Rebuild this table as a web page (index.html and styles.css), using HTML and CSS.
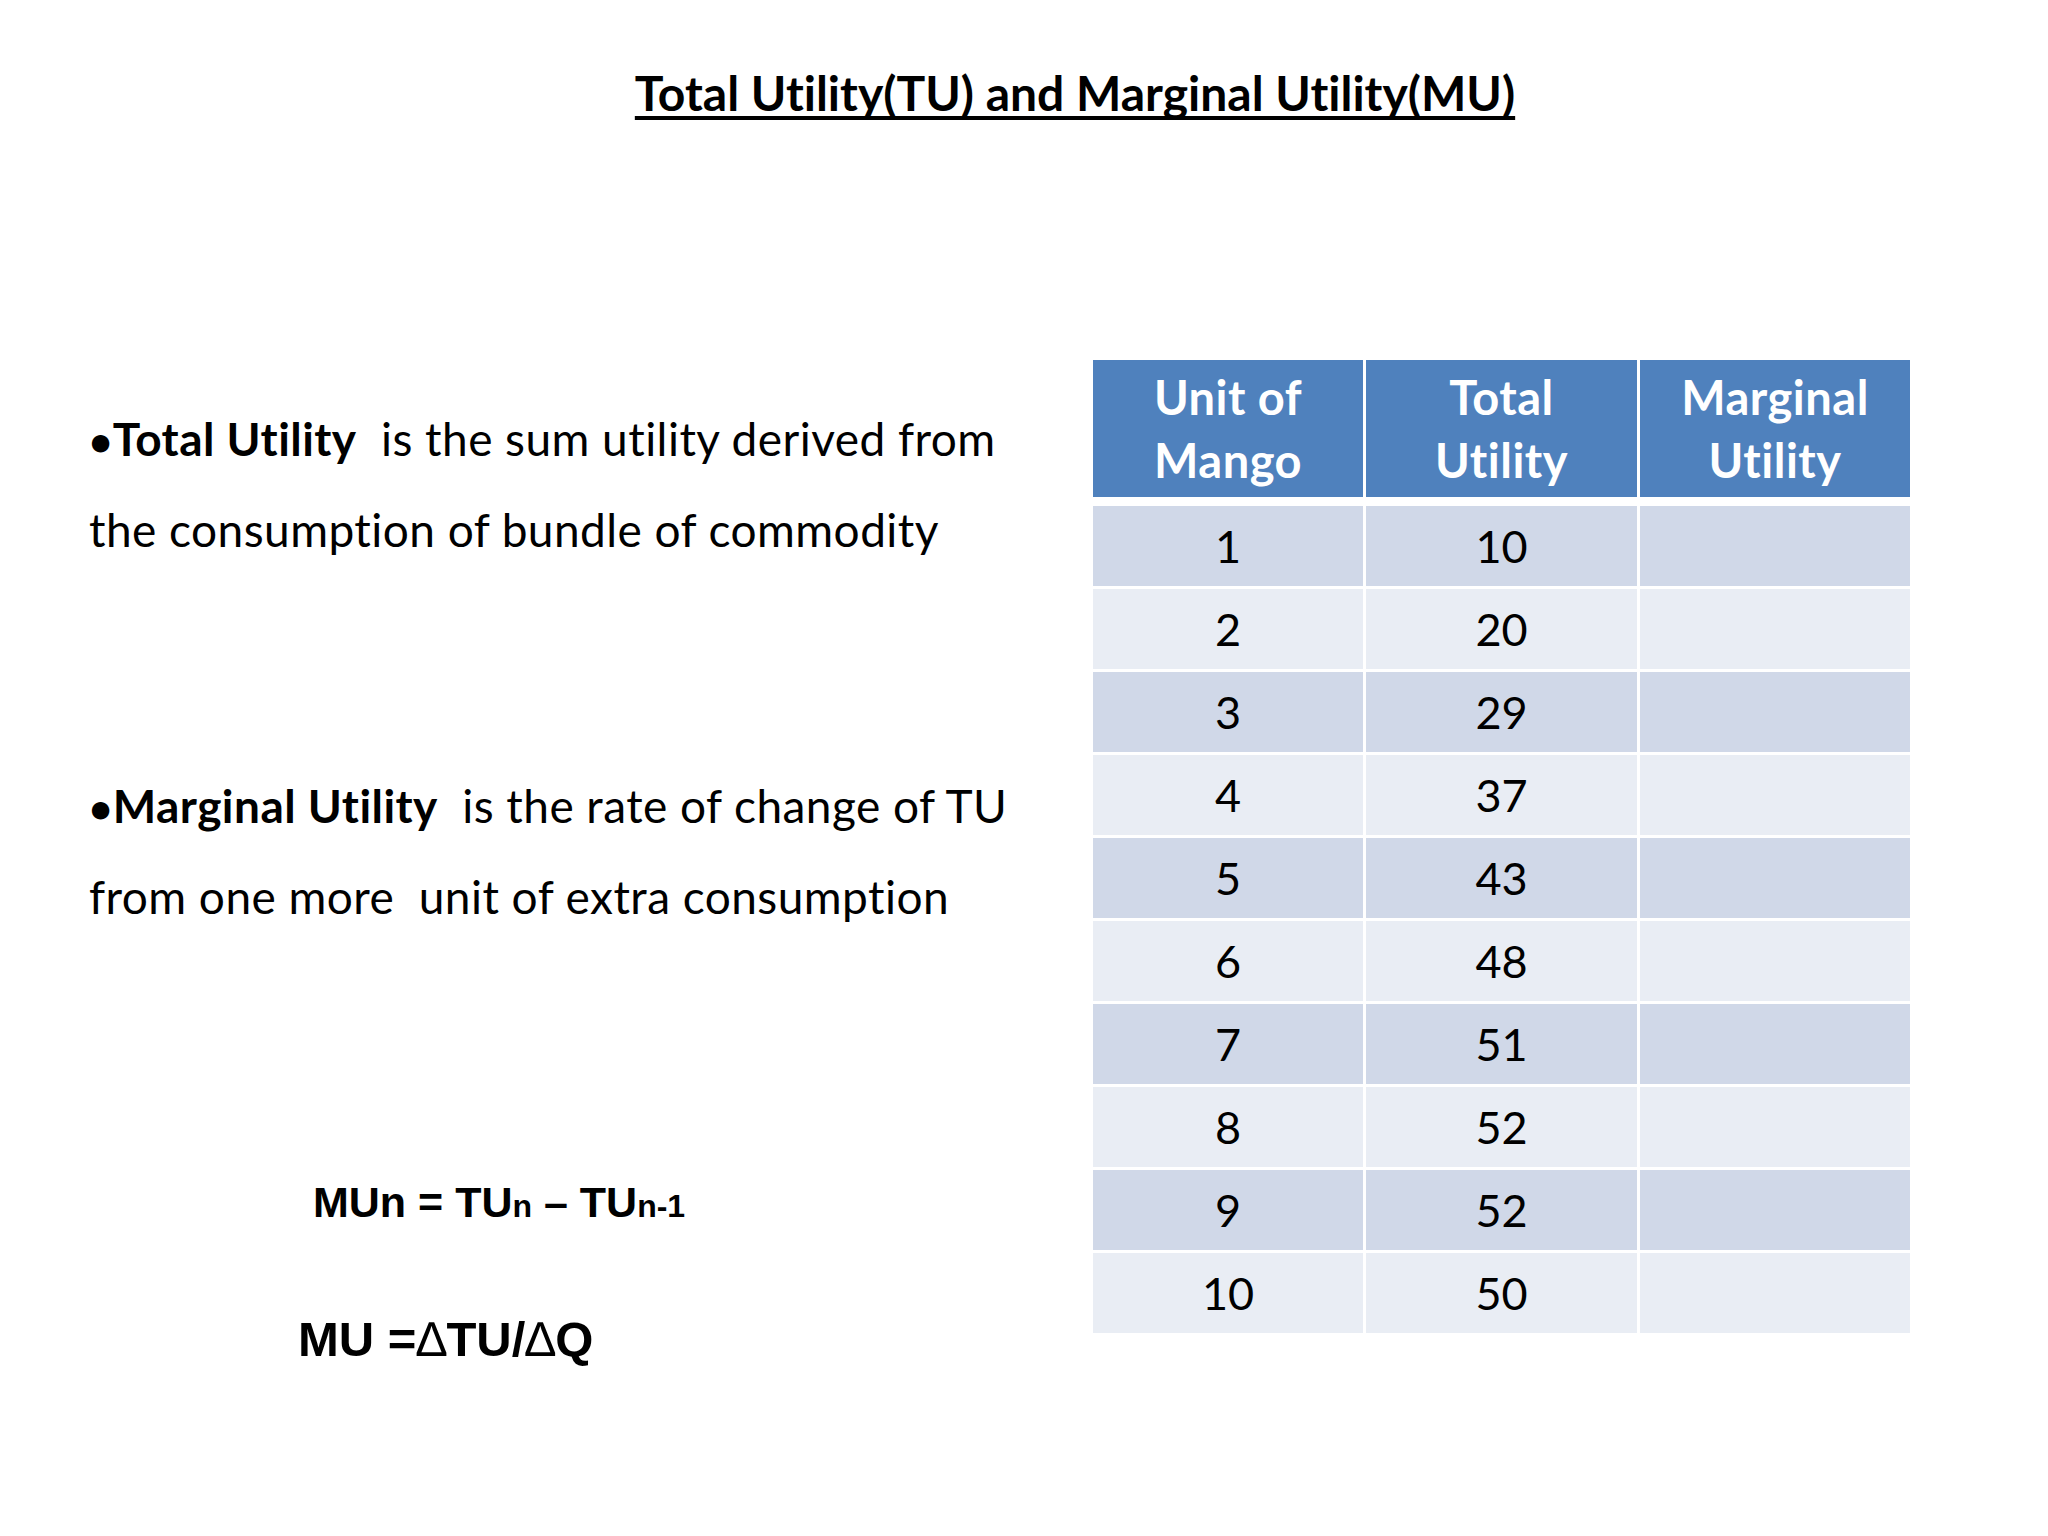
FILE: index.html
```html
<!DOCTYPE html>
<html>
<head>
<meta charset="utf-8">
<link rel="stylesheet" href="styles.css">
</head>
<body>
<div class="slide">
  <h1 class="title"><span class="title-text">Total Utility(TU) and Marginal Utility(MU)</span></h1>
  <div class="content">
    <div class="left">
      <p class="para para-first"><b><span class="bullet">•</span>Total Utility</b>&nbsp; is the sum utility derived from<br>the consumption of bundle of commodity</p>
      <p class="para para-second"><b><span class="bullet">•</span>Marginal Utility</b>&nbsp; is the rate of change of TU<br>from one more&nbsp; unit of extra consumption</p>
      <div class="formula formula-one">MUn = TU<span class="sub">n</span> – TU<span class="sub">n-1</span></div>
      <div class="formula formula-two">MU =<span class="delta">∆</span>TU/<span class="delta">∆</span>Q</div>
    </div>
    <div class="table">
      <div class="thead">
        <div class="th">Unit of<br>Mango</div>
        <div class="th">Total<br>Utility</div>
        <div class="th">Marginal<br>Utility</div>
      </div>
      <div class="tbody">
        <div class="td odd">1</div><div class="td odd">10</div><div class="td odd"></div>
        <div class="td even">2</div><div class="td even">20</div><div class="td even"></div>
        <div class="td odd">3</div><div class="td odd">29</div><div class="td odd"></div>
        <div class="td even">4</div><div class="td even">37</div><div class="td even"></div>
        <div class="td odd">5</div><div class="td odd">43</div><div class="td odd"></div>
        <div class="td even">6</div><div class="td even">48</div><div class="td even"></div>
        <div class="td odd">7</div><div class="td odd">51</div><div class="td odd"></div>
        <div class="td even">8</div><div class="td even">52</div><div class="td even"></div>
        <div class="td odd">9</div><div class="td odd">52</div><div class="td odd"></div>
        <div class="td even">10</div><div class="td even">50</div><div class="td even"></div>
      </div>
    </div>
  </div>
</div>
</body>
</html>
```

FILE: styles.css
```css
html, body {
  margin: 0;
  padding: 0;
  background: #ffffff;
}
.slide {
  width: 2048px;
  height: 1536px;
  box-sizing: border-box;
  padding-top: 70px;
  font-family: Lato, "Open Sans", sans-serif;
  font-variant-ligatures: none;
  color: #000;
  overflow: hidden;
}
.title {
  margin: 0;
  padding-left: 102px;
  text-align: center;
  font-size: 48px;
  line-height: 45px;
  font-weight: 700;
  white-space: nowrap;
}
.title-text {
  text-decoration: underline;
  text-decoration-thickness: 4px;
  text-underline-offset: 5px;
  text-decoration-skip-ink: none;
}
.content {
  display: grid;
  grid-template-columns: 1004px 817px;
  padding-left: 89px;
  margin-top: 245px;
  align-items: start;
}
.left {
  display: flex;
  flex-direction: column;
  align-items: flex-start;
}
.para {
  margin: 0;
  font-size: 46px;
  letter-spacing: 0.45px;
  line-height: 91px;
  white-space: nowrap;
}
.para b {
  font-weight: 700;
}
.bullet {
  font-size: 40px;
  line-height: 1;
  font-weight: 700;
}
.para-first {
  margin-top: 33px;
}
.para-second {
  margin-top: 185px;
}
.formula {
  font-family: "Liberation Sans", Arial, sans-serif;
  font-weight: 700;
  line-height: 60px;
  white-space: nowrap;
}
.formula-one {
  font-size: 43px;
  margin-top: 230px;
  margin-left: 224px;
}
.formula-one .sub {
  font-size: 32px;
  line-height: 1;
}
.formula-two {
  font-size: 49px;
  margin-top: 77px;
  margin-left: 209px;
}
.delta {
  font-weight: 400;
}
.table {
  width: 817px;
}
.thead, .tbody {
  display: grid;
  grid-template-columns: 270px 271px 270px;
  column-gap: 3px;
}
.thead {
  grid-auto-rows: 137px;
}
.tbody {
  margin-top: 9px;
  grid-auto-rows: 80px;
  row-gap: 3px;
}
.th {
  background: #4f81bd;
  color: #ffffff;
  font-weight: 700;
  font-size: 47px;
  letter-spacing: 0.5px;
  line-height: 63px;
  display: flex;
  align-items: center;
  justify-content: center;
  text-align: center;
}
.td {
  display: flex;
  align-items: center;
  justify-content: center;
  font-size: 45px;
}
.odd {
  background: #d0d8e8;
}
.even {
  background: #e9edf4;
}
```
